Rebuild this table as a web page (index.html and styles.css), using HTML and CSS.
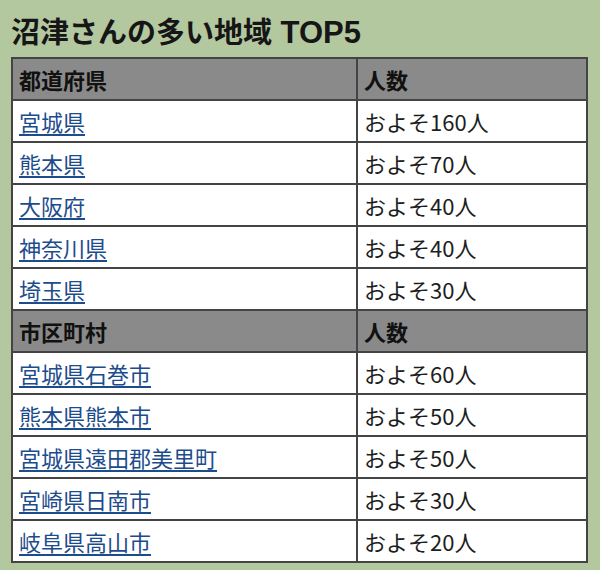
FILE: index.html
```html
<!DOCTYPE html>
<html lang="ja">
<head>
<meta charset="utf-8">
<link rel="stylesheet" href="styles.css">
</head>
<body>
<h1 class="title">沼津さんの多い地域 <span class="top">TOP5</span></h1>
<table class="rank">
  <colgroup><col class="c1"><col class="c2"></colgroup>
  <tr class="head"><th>都道府県</th><th>人数</th></tr>
  <tr><td><a href="#">宮城県</a></td><td>およそ160人</td></tr>
  <tr><td><a href="#">熊本県</a></td><td>およそ70人</td></tr>
  <tr><td><a href="#">大阪府</a></td><td>およそ40人</td></tr>
  <tr><td><a href="#">神奈川県</a></td><td>およそ40人</td></tr>
  <tr><td><a href="#">埼玉県</a></td><td>およそ30人</td></tr>
  <tr class="head"><th>市区町村</th><th>人数</th></tr>
  <tr><td><a href="#">宮城県石巻市</a></td><td>およそ60人</td></tr>
  <tr><td><a href="#">熊本県熊本市</a></td><td>およそ50人</td></tr>
  <tr><td><a href="#">宮城県遠田郡美里町</a></td><td>およそ50人</td></tr>
  <tr><td><a href="#">宮崎県日南市</a></td><td>およそ30人</td></tr>
  <tr><td><a href="#">岐阜県高山市</a></td><td>およそ20人</td></tr>
</table>
</body>
</html>
```
FILE: styles.css
```css
html, body {
  margin: 0;
  padding: 0;
  background: #b4c8a0;
}
body {
  padding: 12px 12px 0 11px;
  font-family: "Noto Sans CJK JP", "Liberation Sans", sans-serif;
  color: #1a1a1a;
}
.title {
  margin: 0 0 8px 0;
  height: 37px;
  font-size: 29px;
  line-height: 37px;
  font-weight: bold;
  color: #161616;
  white-space: nowrap;
}
.top {
  font-family: "Liberation Sans", sans-serif;
  font-size: 31px;
  line-height: 1;
  margin-left: 2px;
}
.rank {
  border-collapse: collapse;
  width: 577px;
  background: #fff;
  border: 2px solid #444;
}
.c1 { width: 345px; }
.rank th, .rank td {
  border: 2px solid #444;
  height: 40px;
  padding: 0 6px;
  text-align: left;
  font-size: 22px;
  line-height: 26px;
  vertical-align: middle;
}
.rank th {
  background: #8a8a8a;
  font-weight: bold;
  color: #111;
}
.rank td {
  font-weight: normal;
  color: #1e1e1e;
}
.rank a {
  color: #1d4c8c;
  text-decoration: underline;
  text-underline-offset: 3px;
}
```
